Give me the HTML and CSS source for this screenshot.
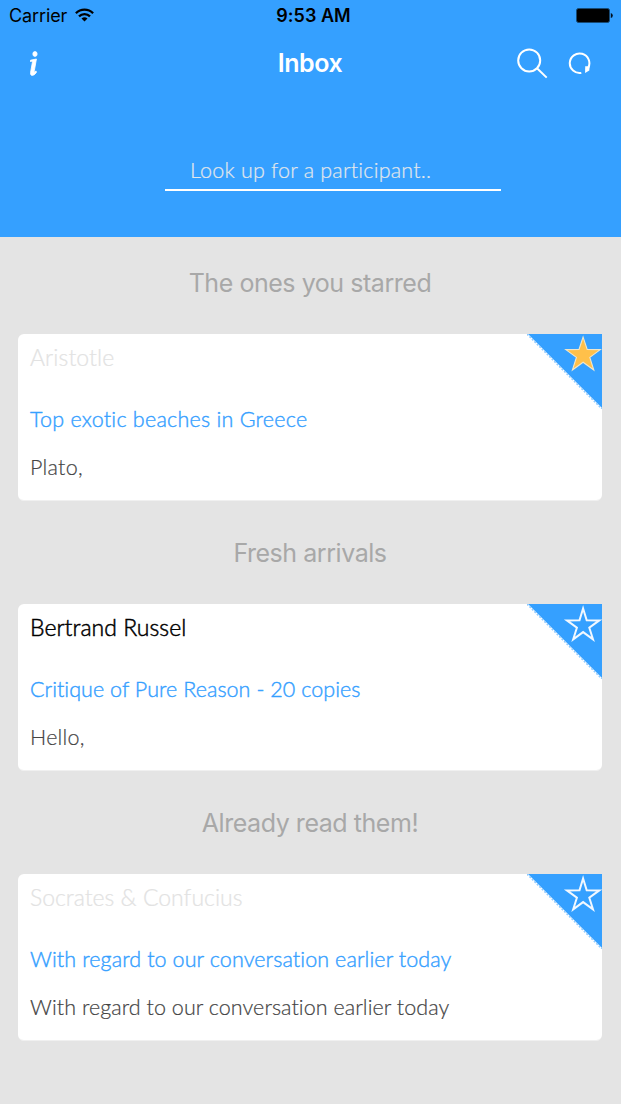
FILE: index.html
```html
<!DOCTYPE html>
<html lang="en">
<head>
<meta charset="utf-8">
<title>Inbox</title>
<link rel="stylesheet" href="styles.css">
</head>
<body>
<header class="header">
  <div class="status">
    <div class="carrier"><span>Carrier</span>
      <svg class="wifi" width="19" height="14" viewBox="0 0 19 14" fill="none" stroke="#000" stroke-width="2.3"><path d="M.9 5.2a12.2 12.2 0 0 1 17.2 0"/><path d="M4 8.4a7.8 7.8 0 0 1 11 0"/><path d="M9.5 13.4 6.5 10.6a4.3 4.3 0 0 1 6 0z" fill="#000" stroke="none"/></svg>
    </div>
    <span class="time">9:53 AM</span>
    <svg class="battery" width="37" height="15" viewBox="0 0 37 15"><rect x=".5" y=".5" width="33" height="14" rx="2" fill="#000" stroke="#174a75"/><path d="M34.8 5q2 .5 2 2.5t-2 2.5z" fill="#001020"/></svg>
  </div>
  <nav class="navbar">
    <svg class="info" width="8" height="25" viewBox="0 0 9 25" preserveAspectRatio="none" fill="#fff" stroke="#fff" stroke-width=".9"><circle cx="5.6" cy="3" r="2.4"/><path d="M.6 9.2 7.2 8 4.9 19.6Q4.5 21.5 5.2 21.2L6.8 19.9 7.2 21.4Q5.2 24.4 2.2 24.4.2 24.3.7 21.2L2.7 11.3Q2.9 10.3 2 10.3L.3 10.5z"/></svg>
    <h1 class="title">Inbox</h1>
    <div class="actions">
      <svg width="31" height="31" viewBox="0 0 31 31" fill="none" stroke="#fff" stroke-width="2"><circle cx="12.2" cy="12.4" r="11"/><path d="m20 20.2 9.7 9.4"/></svg>
      <svg width="23" height="23" viewBox="0 0 23 23" fill="none" stroke="#fff" stroke-width="2"><path d="M13.3 20.9A9.8 9.8 0 1 1 20.2 15.9"/><path d="M17.2 14.2h4.4l-.3 4.2-4.2 2.6z" fill="#fff" stroke="none"/></svg>
    </div>
  </nav>
  <div class="search"><span class="placeholder">Look up for a participant..</span></div>
</header>
<main class="list">
  <section class="group">
    <h2 class="group-title starred-title">The ones you starred</h2>
    <article class="card">
      <div class="name aristotle">Aristotle</div>
      <div class="subject greece">Top exotic beaches in Greece</div>
      <div class="preview plato">Plato,</div>
      <svg class="corner" width="75" height="75" viewBox="0 0 75 75"><path d="M1 0H75V74z" fill="#35a0ff"/><path d="M0 0 75 75" stroke="#8fcaff" stroke-width="1.6" stroke-dasharray="2 1.5"/><path d="m56.1 3.1 4.1 12.4 13.2.1-10.6 7.8 4 12.6-10.7-7.7-10.7 7.7 4-12.6-10.6-7.8 13.2-.1z" fill="#ffc04a" stroke="#f0e7cc" stroke-width="1.1"/></svg>
    </article>
  </section>
  <section class="group">
    <h2 class="group-title fresh-title">Fresh arrivals</h2>
    <article class="card">
      <div class="name unread">Bertrand Russel</div>
      <div class="subject reason">Critique of Pure Reason - 20 copies</div>
      <div class="preview hello">Hello,</div>
      <svg class="corner" width="75" height="75" viewBox="0 0 75 75"><path d="M1 0H75V74z" fill="#35a0ff"/><path d="M0 0 75 75" stroke="#8fcaff" stroke-width="1.6" stroke-dasharray="2 1.5"/><path d="m56.1 4.5 3.6 11.8 12.6.1-10 7.3 3.7 11.6-9.9-7.2-9.9 7.2 3.7-11.6-10-7.3 12.6-.1z" fill="none" stroke="#f2f8ff" stroke-width="2"/></svg>
    </article>
  </section>
  <section class="group">
    <h2 class="group-title read-title">Already read them!</h2>
    <article class="card">
      <div class="name socrates">Socrates &amp; Confucius</div>
      <div class="subject regard">With regard to our conversation earlier today</div>
      <div class="preview regard-preview">With regard to our conversation earlier today</div>
      <svg class="corner" width="75" height="75" viewBox="0 0 75 75"><path d="M1 0H75V74z" fill="#35a0ff"/><path d="M0 0 75 75" stroke="#8fcaff" stroke-width="1.6" stroke-dasharray="2 1.5"/><path d="m56.1 4.5 3.6 11.8 12.6.1-10 7.3 3.7 11.6-9.9-7.2-9.9 7.2 3.7-11.6-10-7.3 12.6-.1z" fill="none" stroke="#f2f8ff" stroke-width="2"/></svg>
    </article>
  </section>
</main>
</body>
</html>
```
FILE: styles.css
```css
* { box-sizing: border-box; }
body { margin: 0; width: 621px; height: 1104px; overflow: hidden; background: #e4e4e4; font-family: Lato, sans-serif; white-space: nowrap; font-variant-ligatures: none; }
h1, h2 { margin: 0; }
svg { display: block; flex: none; }
.header { height: 237px; background: #35a0ff; font-family: Inter, sans-serif; }
.status { height: 31px; display: grid; grid-template-columns: 1fr auto 1fr; align-items: center; padding: 0 8px 0 9px; font-size: 18px; line-height: 31px; }
.carrier { display: flex; align-items: center; gap: 8px; letter-spacing: -.12px; }
.wifi { margin-bottom: 2px; }
.time { font-weight: 600; font-size: 18px; margin-left: 5px; }
.battery { justify-self: end; }
.navbar { height: 64px; display: grid; grid-template-columns: 1fr auto 1fr; align-items: center; padding: 0 30px 0 29px; }
.info { margin-left: .5px; }
.title { color: #fff; font-size: 25px; font-weight: 600; line-height: 64px; letter-spacing: -.4px; }
.actions { display: flex; align-items: center; justify-content: flex-end; gap: 20.5px; }
.search { width: 336px; height: 45px; margin: 51px 0 0 165px; border-bottom: 2px solid #fff; padding-left: 25px; font: 300 21.5px/48px Lato, sans-serif; color: #e2e7ec; letter-spacing: .2px; -webkit-text-stroke: .2px; }
.group { height: 270px; padding: 26px 19px 0 18px; }
.group-title { height: 71px; text-align: center; font: 400 25px/40px Inter, sans-serif; letter-spacing: -.45px; color: #a8a8a8; }
.card { position: relative; height: 167px; padding: 0 12px; background: #fff; border-radius: 6px 0 6px 6px; border-bottom: 1px solid #f0f0f0; }
.name { height: 61px; padding-top: 3px; font-size: 23px; font-weight: 300; line-height: 40px; color: #e2e2e2; -webkit-text-stroke: .2px; }
.aristotle { letter-spacing: .1px; }
.unread { color: #000; -webkit-text-stroke: .5px; letter-spacing: .04px; }
.subject { height: 48px; font-size: 21.5px; font-weight: 300; line-height: 48px; color: #35a0ff; -webkit-text-stroke: .4px; }
.greece { letter-spacing: .25px; }
.reason { letter-spacing: .05px; }
.regard { letter-spacing: .1px; }
.preview { height: 48px; font-size: 21.5px; font-weight: 300; line-height: 48px; color: #444; -webkit-text-stroke: .2px; }
.plato, .hello { letter-spacing: .25px; }
.regard-preview { letter-spacing: .05px; }
.corner { position: absolute; top: 0; right: 0; }
```
